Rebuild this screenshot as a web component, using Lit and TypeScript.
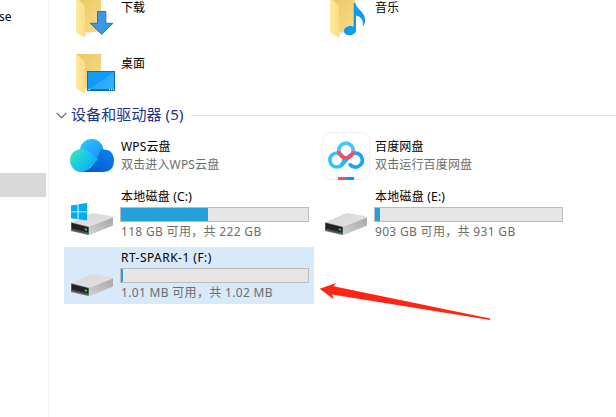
import { LitElement, html, css, svg, nothing } from "lit";
import { customElement, property } from "lit/decorators.js";

const folder = svg`
  <path d="M12 9H37V43H14Z" fill="url(#back)"/>
  <path d="M21 47L28 43H21Z" fill="#ddd" opacity=".6"/>
  <path d="M12 9L19.5 15.2Q21 16.4 21 18V49L13 44Q12 43.4 12 42Z" fill="url(#flap)"/>`;

const drive = svg`
  <path d="M7 36.4L26 28Q29 26.9 32 27.4L47.5 30.2Q49 30.6 49 32L25 41.4Z" fill="url(#top)"/>
  <path d="M24.6 41L49 31.6V39.4L27 48.5L24 49Z" fill="url(#side)"/>
  <path d="M7 36.2L25 40.8V48.6L24 49L7 45Z" fill="#77777a"/>
  <path d="M7.6 37L24.4 41.3V46.8L7.6 42.8Z" fill="#222224"/>
  <path d="M7.6 42.8L24.4 46.8V48L7.6 44.2Z" fill="#4c4c4e"/>
  <path d="M20.8 42.3L23 42.9V44.8L20.8 44.2Z" fill="#1ee628"/>`;

const icons: Record<string, unknown> = {
  download: svg`${folder}
    <path d="M33.5 22.5H41.8V34.3H49L37.7 45.3L26.3 34.3H33.5Z" fill="#3c97e8" stroke="#2272b8"/>`,
  music: svg`${folder}
    <ellipse cx="31.9" cy="41.6" rx="6.1" ry="4.6" transform="rotate(-8 32 41.6)" fill="#0a9bf5"/>
    <path d="M35.7 14H37.4C38 20 46.8 22.5 47.2 31C47.3 34 46 36 44.6 37.4C46.2 30.5 42 27.2 38 26.4V42H35.7Z" fill="#0a9bf5"/>`,
  desktop: svg`${folder}
    <rect x="23.5" y="26.5" width="27" height="19" fill="url(#screen)" stroke="#0870b8"/>
    <path d="M24 44.5H50" stroke="#0875bb"/>
    <path d="M24.5 44.5H26M45 44.5H46M47 44.5H48M49 44.5H50" stroke="#fff"/>`,
  wps: svg`
    <circle cx="27.7" cy="25.8" r="11.8" fill="url(#sky)"/>
    <path d="M32 36L37 24.2Q50 23.8 50 35.6Q50 47 38.5 47H17.5L26 43Z" fill="url(#deep)"/>
    <path d="M17.5 24Q22 24 25.5 27L34 34.5L24.5 44Q21.5 47 17.5 47A11.5 11.5 0 0 1 17.5 24Z" fill="url(#mint)"/>`,
  baidu: svg`
    <rect x="4.5" y="7.5" width="47" height="47" rx="8" fill="#fff" stroke="#f0f0f0"/>
    <g fill="none" stroke-width="3.7">
      <path d="M23.8 40A7 7 0 1 1 23.8 30" stroke="#31c4f5"/>
      <path d="M23.7 30.1Q25.8 32 25.8 35Q25.8 38 23.7 40" stroke="#31c4f5"/>
      <path d="M23.2 40.4L32.2 30.6" stroke="#24b6f8"/>
      <path d="M32 30.6A7 7 0 1 1 32.2 39.8" stroke="#16a5fb" stroke-linecap="round"/>
      <path d="M20.7 25.5A7.3 7.3 0 0 1 35.3 25.5" stroke="#40c8f7"/>
      <path d="M20.7 25.5A7.3 7.3 0 0 0 35.3 25.5" stroke="#fb4b68"/>
    </g>
    <path d="M20 52H28V55H20Z" fill="#fb4b68"/>
    <path d="M28 52H36V55H28Z" fill="#188cff"/>`,
  drive,
  system: svg`${drive}
    <path d="M7 19.4L13.6 18.4V25.4H7ZM14.5 18.3L23 17V25.4H14.5ZM7 26.3H13.6V33.2L7 32.2ZM14.5 26.3H23V34.6L14.5 33.3Z" fill="#00adef"/>`,
};

@customElement("tile-icon")
class TileIcon extends LitElement {
  @property() name = "";
  static styles = css`
    :host { display: block; width: 56px; height: 57px; flex: none; }
    svg { display: block; overflow: visible; }
  `;
  render() {
    return html`<svg width="56" height="57" viewBox="0 0 56 57">
      <defs>
        <linearGradient id="back" x1="0" y1="0" x2="1" y2="1"><stop stop-color="#e8c766"/><stop offset="1" stop-color="#fbdc83"/></linearGradient>
        <linearGradient id="flap" x1="0" y1="0" x2="1" y2="0"><stop stop-color="#ffe99f"/><stop offset="1" stop-color="#fbdd88"/></linearGradient>
        <linearGradient id="top" x1="0" y1="0" x2="1" y2="1"><stop stop-color="#d4d4d6"/><stop offset="1" stop-color="#e6e6e8"/></linearGradient>
        <linearGradient id="side" x1="0" y1="1" x2="1" y2="0"><stop stop-color="#d2d2d4"/><stop offset="1" stop-color="#a8a8aa"/></linearGradient>
        <linearGradient id="screen" x1="0" y1="0" x2="1" y2="1"><stop offset=".5" stop-color="#109bfb"/><stop offset=".5" stop-color="#2aa9ff"/><stop offset="1" stop-color="#39b3ff"/></linearGradient>
        <linearGradient id="sky" x1="0" y1="0" x2="1" y2="1"><stop stop-color="#2fc9ff"/><stop offset="1" stop-color="#1688fa"/></linearGradient>
        <linearGradient id="deep" x1="1" y1="0" x2="0" y2="1"><stop stop-color="#0c84f2"/><stop offset="1" stop-color="#0453c8"/></linearGradient>
        <linearGradient id="mint" x1="0" y1="0" x2="1" y2=".7"><stop offset=".05" stop-color="#3fe6b5"/><stop offset=".55" stop-color="#18c8e8"/><stop offset="1" stop-color="#0aa5fa"/></linearGradient>
      </defs>
      ${icons[this.name]}
    </svg>`;
  }
}

@customElement("item-tile")
class ItemTile extends LitElement {
  @property() icon = "";
  @property() label = "";
  @property() note = "";
  @property() kind = "folder";
  @property({ type: Number }) used = 0;
  @property({ type: Boolean, reflect: true }) selected = false;
  static styles = css`
    :host { display: flex; width: 250px; height: 57px; }
    :host([selected]) { background: #d8e9f9; }
    .text { flex: none; width: 189px; display: flex; flex-direction: column; white-space: nowrap; }
    .folder { padding-top: 10px; }
    .app { padding-top: 13px; letter-spacing: 0.15px; }
    .drive { padding-top: 2px; }
    .label, .note { height: 18px; line-height: 18px; padding-left: 1px; }
    .label { color: #000; }
    .note { color: #6d6d6d; }
    .drive .label { letter-spacing: 0.22px; }
    :host([selected]) .label { letter-spacing: 0.47px; }
    .drive .note { letter-spacing: 0.32px; margin-top: 1px; }
    .bar { box-sizing: border-box; height: 15px; margin-top: 1px; border: 1px solid #bcbcbc; background: #e6e6e6; }
    .fill { height: 100%; background: #26a0da; }
  `;
  render() {
    return html`<tile-icon .name=${this.icon}></tile-icon>
      <div class="text ${this.kind}">
        <div class="label">${this.label}</div>
        ${this.kind === "drive"
          ? html`<div class="bar"><div class="fill" style="width:${this.used}%"></div></div>`
          : nothing}
        ${this.note ? html`<div class="note">${this.note}</div>` : nothing}
      </div>`;
  }
}

@customElement("app-root")
class AppRoot extends LitElement {
  static styles = css`
    :host {
      display: flex; position: relative; width: 616px; height: 417px; overflow: hidden; background: #fff;
      font: 12px "Noto Sans", "Noto Sans CJK SC", sans-serif;
    }
    .side { box-sizing: border-box; width: 49px; flex: none; border-right: 1px solid #f0f0f0; }
    .entry { height: 18px; line-height: 18px; margin-top: 8px; margin-left: -1px; }
    .current { width: 46px; height: 24px; margin-top: 147px; background: #d9d9d9; }
    .main { flex: 1; min-width: 0; }
    .grid { display: grid; grid-template-columns: 250px 250px; column-gap: 4px; margin-left: 15px; }
    .folders { grid-auto-rows: 56px; margin-top: -11px; }
    .devices { row-gap: 4px; }
    .header { display: flex; align-items: center; height: 20px; margin-top: 4px; padding-left: 7px; color: #1e3287; font-size: 15px; white-space: nowrap; }
    .chevron { width: 11px; height: 7px; margin-right: 4px; }
    .rule { flex: 1; height: 1px; margin-left: 7px; background: #e2e2e2; }
    .title { width: 113px; height: 20px; line-height: 18px; letter-spacing: 0.1px; }
    .pointer { position: absolute; left: 0; top: 0; pointer-events: none; }
  `;
  render() {
    return html`
      <div class="side"><div class="entry">se</div><div class="current"></div></div>
      <div class="main">
        <div class="grid folders">
          <item-tile icon="download" label="下载"></item-tile>
          <item-tile icon="music" label="音乐"></item-tile>
          <item-tile icon="desktop" label="桌面"></item-tile>
        </div>
        <div class="header">
          <svg class="chevron" viewBox="0 0 11 7"><path d="M.6 .8L5.5 5.7L10.4 .8" fill="none" stroke="#666" stroke-width="1.2"/></svg>
          <span class="title">设备和驱动器 (5)</span><span class="rule"></span>
        </div>
        <div class="grid devices">
          <item-tile kind="app" icon="wps" label="WPS云盘" note="双击进入WPS云盘"></item-tile>
          <item-tile kind="app" icon="baidu" label="百度网盘" note="双击运行百度网盘"></item-tile>
          <item-tile kind="drive" icon="system" label="本地磁盘 (C:)" note="118 GB 可用，共 222 GB" used="46.6"></item-tile>
          <item-tile kind="drive" icon="drive" label="本地磁盘 (E:)" note="903 GB 可用，共 931 GB" used="2.8"></item-tile>
          <item-tile kind="drive" icon="drive" label="RT-SPARK-1 (F:)" note="1.01 MB 可用，共 1.02 MB" used="0.9" selected></item-tile>
        </div>
      </div>
      <svg class="pointer" width="616" height="417">
        <path d="M319.7 288.7L336 283L333.5 286.2L490 318.6V320L332.2 294.6L333.7 299.3Z" fill="#ff2414"/>
      </svg>`;
  }
}
